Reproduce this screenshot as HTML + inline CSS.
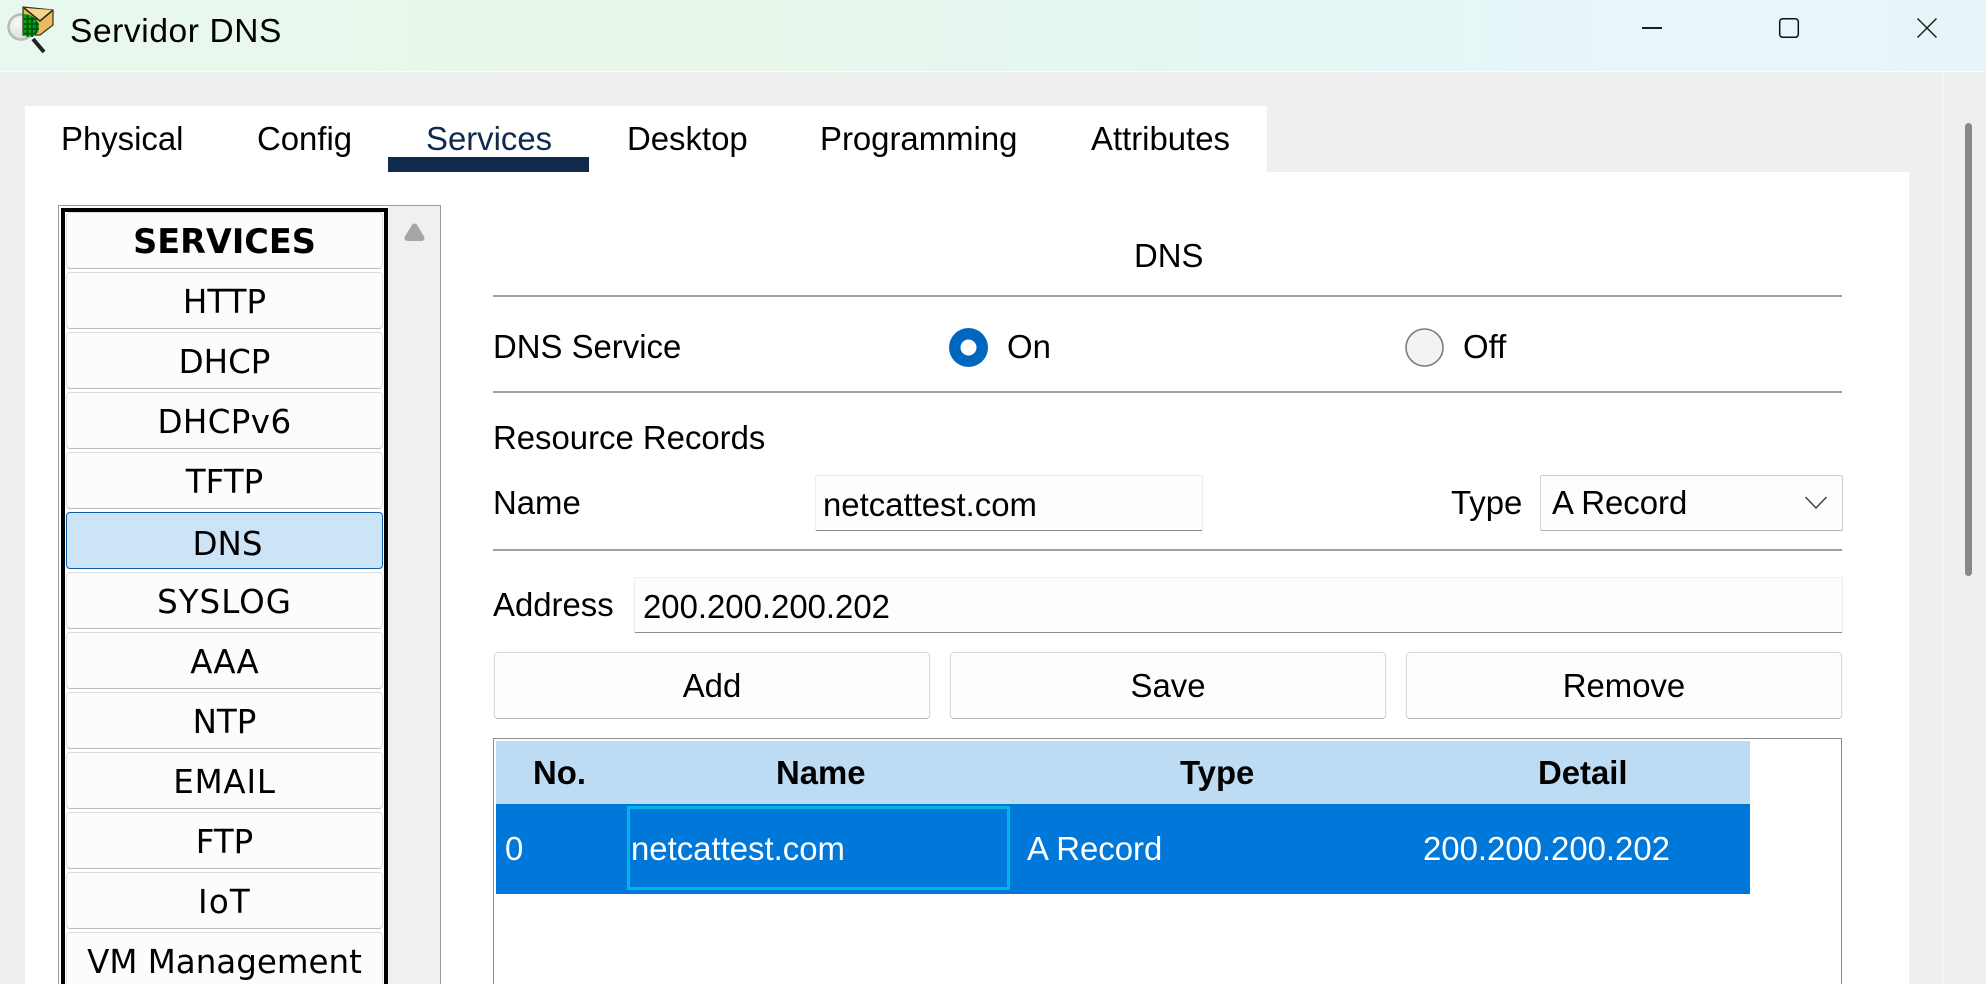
<!DOCTYPE html>
<html><head><meta charset="utf-8"><title>Servidor DNS</title>
<style>
html,body{margin:0;padding:0;width:1986px;height:984px;overflow:hidden;background:#efefef}
body{position:relative;font-family:"Liberation Sans",Arial,sans-serif;color:#000}
div,svg{position:absolute;box-sizing:border-box}
.t{font-size:32.9px;line-height:40px;height:40px;white-space:nowrap}
.hr{left:493px;width:1349px;height:2px;background:#a0a0a0}
.tab{top:119px}
.it{left:66px;width:317px;height:57px;background:#fcfcfc;border:1px solid #dcdcdc;border-bottom:1.5px solid #bcbcbc;border-radius:4px;font-family:"DejaVu Sans",Verdana,sans-serif;font-size:32.5px;line-height:40px;text-align:center;white-space:nowrap}
.it span{position:absolute;left:0;right:0;top:9px}
.btn{top:652px;height:67px;background:#fdfdfd;border:1px solid #d6d6d6;border-bottom:1px solid #b4b4b4;border-radius:4px}
.btn span{position:absolute;left:0;right:0;top:13px;text-align:center;font-size:32.9px;line-height:40px}
.b{font-weight:bold}
.w{color:#fff}
</style></head>
<body>
<div style="left:0;top:0;width:1986px;height:71px;background:linear-gradient(90deg,#e9f8ee 0%,#e8f7e9 35%,#e5f6f3 60%,#e8f5fa 85%,#e8f5f8 100%)"></div>
<div style="left:0;top:71px;width:1986px;height:1px;background:#fbfbfb"></div>

<svg style="left:0;top:0" width="60" height="56" viewBox="0 0 60 56">
<defs><radialGradient id="g" cx="35%" cy="35%" r="75%"><stop offset="0" stop-color="#f6f7f6"/><stop offset="1" stop-color="#d8dbd8"/></radialGradient></defs>
<circle cx="21" cy="27" r="12.500" fill="url(#g)" stroke="#b6bab6" stroke-width="2.500"/>
<path d="M23 7L53 10V25L40 35H23Z" fill="#e9bc62" stroke="#3a2f18" stroke-width="1.200"/>
<path d="M24 8L40 21L53 10" fill="#f3d68d" stroke="#2b2410" stroke-width="1.500"/>
<path d="M23.500 14C32 14 39 20 39 27C39 31 37 34 34 36C30 38 27 35 23.500 35Z" fill="#00a800"/>
<path d="M27.500 15V37M32 17V37M36.500 21V33M24 19H37M24 24H39M24 29H39M24 33.500H36" stroke="#042" stroke-width="1.600" fill="none"/>
<path d="M33 39L44 52" stroke="#222" stroke-width="4"/>
</svg>
<div class="t" style="left:70px;top:12px;font-size:33.5px;letter-spacing:.6px">Servidor DNS</div>

<svg style="left:1630px;top:10px" width="320" height="40" viewBox="1630 10 320 40">
<path d="M1642 28H1662" stroke="#000" stroke-width="1.700"/>
<rect x="1779.700" y="18.700" width="18.600" height="18.600" rx="3" fill="none" stroke="#111" stroke-width="1.500"/>
<path d="M1917.500 18.500L1936.500 37.500M1936.500 18.500L1917.500 37.500" stroke="#222" stroke-width="1.500"/>
</svg>

<div style="left:1942px;top:72px;width:1px;height:912px;background:#fbfbfb"></div>
<div style="left:1965px;top:123px;width:7px;height:453px;background:#888;border-radius:3.500px"></div>

<div style="left:25px;top:106px;width:1242px;height:66px;background:#fff"></div>
<div style="left:25px;top:172px;width:1884px;height:812px;background:#fff"></div>

<div class="t tab" style="left:61px">Physical</div>
<div class="t tab" style="left:257px">Config</div>
<div class="t tab" style="left:426px;color:#10294d">Services</div>
<div style="left:388px;top:157px;width:201px;height:15px;background:#10294d"></div>
<div class="t tab" style="left:627px">Desktop</div>
<div class="t tab" style="left:820px">Programming</div>
<div class="t tab" style="left:1091px">Attributes</div>

<!-- services list -->
<div style="left:58px;top:205px;width:383px;height:790px;background:#fff;border:1px solid #9a9a9a"></div>
<div style="left:388px;top:206px;width:52px;height:790px;background:#f0f0f0"></div>
<div style="left:61px;top:208px;width:327px;height:790px;background:#fff;border:4px solid #000"></div>
<svg style="left:401px;top:221px" width="27" height="23" viewBox="0 0 27 23"><path d="M13.500 5.500L20.500 17H6.500Z" fill="#a6a6a6" stroke="#a6a6a6" stroke-width="6" stroke-linejoin="round"/></svg>

<div class="it" style="top:212px;font-weight:bold;font-size:33.5px"><span>SERVICES</span></div>
<div class="it" style="top:272px"><span>HTTP</span></div>
<div class="it" style="top:332px"><span>DHCP</span></div>
<div class="it" style="top:392px;letter-spacing:.4px"><span>DHCPv6</span></div>
<div class="it" style="top:452px"><span>TFTP</span></div>
<div class="it" style="top:512px;background:#cce4f7;border:1.500px solid #0f5fa8"><span style="top:11px;left:6px">DNS</span></div>
<div class="it" style="top:572px;letter-spacing:1px"><span>SYSLOG</span></div>
<div class="it" style="top:632px"><span>AAA</span></div>
<div class="it" style="top:692px"><span>NTP</span></div>
<div class="it" style="top:752px;letter-spacing:.8px"><span>EMAIL</span></div>
<div class="it" style="top:812px"><span>FTP</span></div>
<div class="it" style="top:872px;letter-spacing:1.200px"><span>IoT</span></div>
<div class="it" style="top:932px"><span>VM Management</span></div>

<!-- DNS panel -->
<div class="t" style="left:1134px;top:236px">DNS</div>
<div class="hr" style="top:295px"></div>
<div class="t" style="left:493px;top:327px">DNS Service</div>
<svg style="left:949px;top:328px" width="39" height="39" viewBox="0 0 39 39"><circle cx="19.500" cy="19.500" r="19.500" fill="#0067c0"/><circle cx="19.500" cy="19.500" r="8" fill="#fff"/></svg>
<div class="t" style="left:1007px;top:327px">On</div>
<svg style="left:1405px;top:328px" width="39" height="39" viewBox="0 0 39 39"><circle cx="19.500" cy="19.500" r="18.500" fill="#f3f3f3" stroke="#7c7c7c" stroke-width="1.600"/></svg>
<div class="t" style="left:1463px;top:327px">Off</div>
<div class="hr" style="top:391px"></div>
<div class="t" style="left:493px;top:418px">Resource Records</div>
<div class="t" style="left:493px;top:483px">Name</div>
<div style="left:815px;top:475px;width:388px;height:56px;background:#fdfdfd;border:1px solid #ececec;border-bottom:1.5px solid #8a8a8a;border-radius:2px"></div>
<div class="t" style="left:823px;top:485px">netcattest.com</div>
<div class="t" style="left:1451px;top:483px">Type</div>
<div style="left:1540px;top:475px;width:303px;height:56px;background:#fdfdfd;border:1px solid #cfcfcf;border-bottom:1.5px solid #b0b0b0;border-radius:2px"></div>
<div class="t" style="left:1552px;top:483px">A Record</div>
<svg style="left:1803px;top:494px" width="26" height="16" viewBox="0 0 26 16"><path d="M2.500 3L13 14L23.500 3" fill="none" stroke="#444" stroke-width="1.500"/></svg>
<div class="hr" style="top:549px"></div>
<div class="t" style="left:493px;top:585px">Address</div>
<div style="left:634px;top:577px;width:1209px;height:56px;background:#fdfdfd;border:1px solid #ececec;border-bottom:1.5px solid #8a8a8a;border-radius:2px"></div>
<div class="t" style="left:643px;top:587px">200.200.200.202</div>

<div class="btn" style="left:494px;width:436px"><span>Add</span></div>
<div class="btn" style="left:950px;width:436px"><span>Save</span></div>
<div class="btn" style="left:1406px;width:436px"><span>Remove</span></div>

<!-- table -->
<div style="left:493px;top:738px;width:1349px;height:260px;background:#fff;border:1.500px solid #8a8a90"></div>
<div style="left:496px;top:741px;width:1254px;height:63px;background:#bddcf3"></div>
<div style="left:496px;top:804px;width:1254px;height:90px;background:#0078d9"></div>
<div style="left:627px;top:806px;width:383px;height:84px;border:3px solid #00b4e8"></div>
<div class="t b" style="left:533px;top:753px">No.</div>
<div class="t b" style="left:776px;top:753px">Name</div>
<div class="t b" style="left:1180px;top:753px">Type</div>
<div class="t b" style="left:1538px;top:753px">Detail</div>
<div class="t w" style="left:505px;top:829px">0</div>
<div class="t w" style="left:631px;top:829px">netcattest.com</div>
<div class="t w" style="left:1027px;top:829px">A Record</div>
<div class="t w" style="left:1423px;top:829px">200.200.200.202</div>
</body></html>
